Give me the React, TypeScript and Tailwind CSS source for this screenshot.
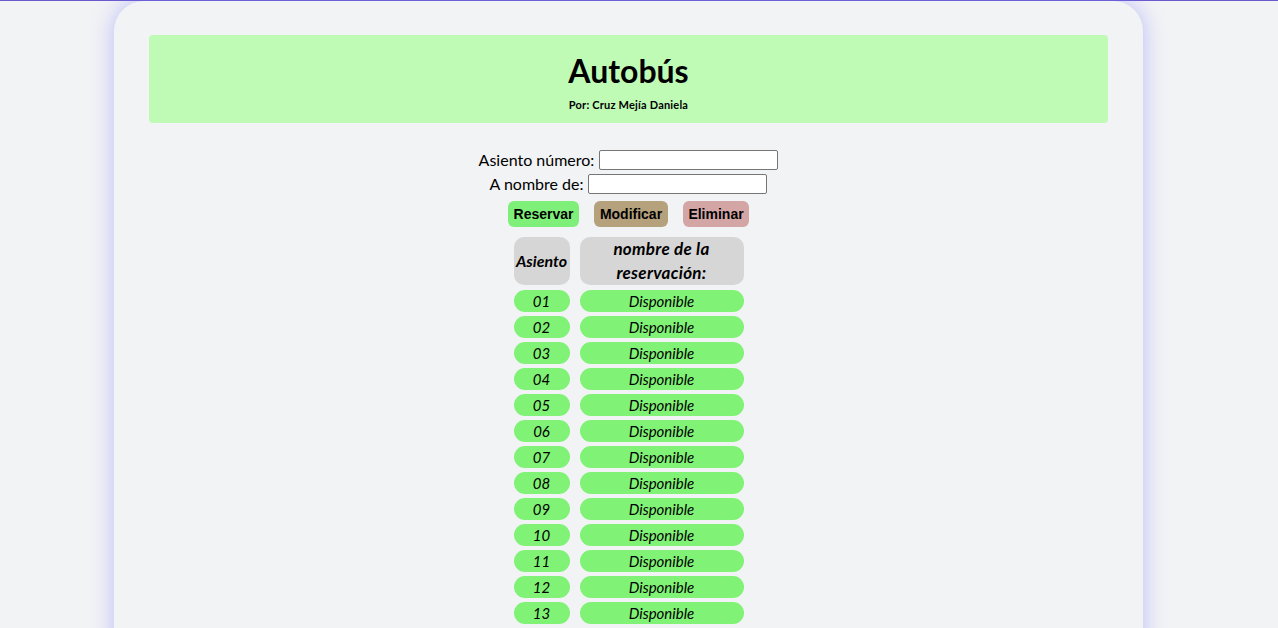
import React from 'react';

const seats = ['01', '02', '03', '04', '05', '06', '07', '08', '09', '10', '11', '12', '13', '14', '15'];

const font = { fontFamily: '"Trebuchet MS", "Lato", "Noto Sans", sans-serif' };

export default function App() {
  return (
    <div className="min-h-screen bg-[#f2f3f5] border-t border-[#6a5acd] text-black" style={font}>
      <div className="ml-[114px] w-[1029px] rounded-[30px] bg-[#f2f3f5] shadow-[0_0_22px_rgba(120,120,255,0.45)] px-[35px] pt-[34px] pb-10">
        <header className="bg-[#bffbb5] rounded-[4px] h-[88px] flex flex-col items-center pt-[16px]">
          <h1 className="text-[32px] font-bold leading-[40px]">Autobús</h1>
          <p className="text-[11px] font-bold leading-[14px] mt-[7px] tracking-[0.2px]">Por: Cruz Mejía Daniela</p>
        </header>

        <form className="flex flex-col items-center mt-[27px]" onSubmit={(e) => e.preventDefault()}>
          <div className="flex items-center h-[20px]">
            <label className="text-[16px] mr-[5px]">Asiento número:</label>
            <input className="w-[179px] h-[20px] bg-white border border-[#767676] rounded-[2px]" />
          </div>
          <div className="flex items-center h-[20px] mt-[4px]">
            <label className="text-[16px] mr-[5px]">A nombre de:</label>
            <input className="w-[179px] h-[20px] bg-white border border-[#767676] rounded-[2px]" />
          </div>
          <div className="flex gap-[15px] mt-[7px] font-['Liberation_Sans',Arial,sans-serif] font-bold text-[14px]">
            <button className="h-[26px] w-[71px] rounded-[6px] bg-[#7ef07a]">Reservar</button>
            <button className="h-[26px] w-[74px] rounded-[6px] bg-[#b5a27c]">Modificar</button>
            <button className="h-[26px] w-[66px] rounded-[6px] bg-[#d4a5a5]">Eliminar</button>
          </div>
        </form>

        <div className="flex flex-col items-center mt-[10px] gap-[4px] italic">
          <div className="flex gap-[10px] font-bold text-[17px] tracking-[0.3px] mb-[1px]">
            <div className="w-[56px] h-[48px] rounded-[10px] bg-[#d6d6d6] flex items-center justify-center tracking-normal text-[16px]">Asiento</div>
            <div className="w-[164px] h-[48px] rounded-[10px] bg-[#d6d6d6] flex items-center justify-center text-center leading-[24px]">
              nombre de la<br />reservación:
            </div>
          </div>
          {seats.map((s) => (
            <div key={s} className="flex gap-[10px] text-[15px]">
              <div className="w-[56px] h-[22px] rounded-full bg-[#80f276] flex items-center justify-center">{s}</div>
              <div className="w-[164px] h-[22px] rounded-full bg-[#80f276] flex items-center justify-center">Disponible</div>
            </div>
          ))}
        </div>
      </div>
    </div>
  );
}
